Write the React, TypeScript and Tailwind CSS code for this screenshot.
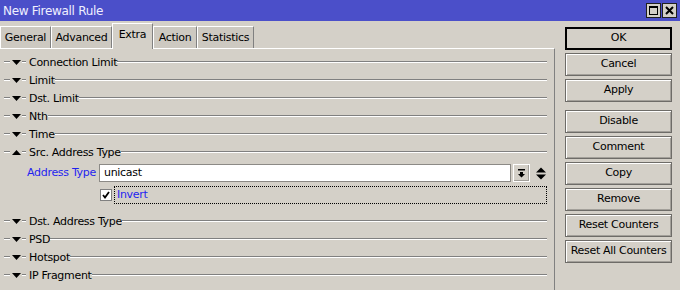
import React from 'react';

const SECTIONS_TOP = ['Connection Limit', 'Limit', 'Dst. Limit', 'Nth', 'Time'];
const SECTIONS_BOTTOM = ['Dst. Address Type', 'PSD', 'Hotspot', 'IP Fragment'];

const TABS: { label: string; w: string }[] = [
  { label: 'General', w: 'w-[51px]' },
  { label: 'Advanced', w: 'w-[61px]' },
  { label: 'Extra', w: 'w-[41px]' },
  { label: 'Action', w: 'w-[44px]' },
  { label: 'Statistics', w: 'w-[57px]' },
];

function Etch({ className = '' }: { className?: string }) {
  return <span className={`block h-[2px] border-t border-[#808080] border-b border-b-white ${className}`} />;
}

function Section({ title, open }: { title: string; open?: boolean }) {
  return (
    <div className="flex h-[18px] items-center">
      <Etch className="ml-[4px] mt-[-2px] w-[6px]" />
      <svg className="ml-[2px] mt-[-2px]" width="9" height="5" viewBox="0 0 9 5">
        {open ? <polygon points="0,5 9,5 4.5,0" fill="#000" /> : <polygon points="0,0 9,0 4.5,5" fill="#000" />}
      </svg>
      <Etch className="ml-[1px] mt-[-2px] w-[4px]" />
      <span className="ml-[3px] text-black">{title}</span>
      <Etch className="mr-[7px] mt-[-2px] flex-1" />
    </div>
  );
}

function Button({ label, primary }: { label: string; primary?: boolean }) {
  return (
    <div
      className={`flex h-[23px] w-[107px] items-center justify-center bg-[#d4d0c8] text-black ${
        primary
          ? 'border-2 border-black'
          : 'border border-[#6e6c68] shadow-[inset_1px_1px_0_#ffffff,inset_-1px_-1px_0_#a3a09a]'
      }`}
    >
      {label}
    </div>
  );
}

export default function App() {
  return (
    <div
      className="flex h-[290px] w-[680px] flex-col overflow-hidden bg-[#d4d0c8] text-[11px] tracking-[-0.3px]"
      style={{ fontFamily: '"DejaVu Sans", sans-serif' }}
    >
      {/* title bar */}
      <div className="flex h-[21px] items-center justify-between bg-[#4b4fc9] pl-[3px] pr-[3px]">
        <span className="text-[12px] text-[#f0f0ff]">New Firewall Rule</span>
        <div className="flex gap-[1px]">
          <div className="flex h-[15px] w-[15px] items-center justify-center border border-[#202020] bg-[#d4d0c8]">
            <span className="block h-[9px] w-[9px] border border-t-2 border-black" />
          </div>
          <div className="flex h-[15px] w-[15px] items-center justify-center border border-[#202020] bg-[#d4d0c8]">
            <svg width="9" height="9" viewBox="0 0 9 9">
              <path d="M1 1 L8 8 M8 1 L1 8" stroke="#000" strokeWidth="2" />
            </svg>
          </div>
        </div>
      </div>

      <div className="flex flex-1">
        {/* left panel */}
        <div className="flex w-[555px] shrink-0 flex-col">
          <div className="flex h-[27px] items-end">
            {TABS.map((t) => {
              const active = t.label === 'Extra';
              return (
                <div
                  key={t.label}
                  className={`relative flex shrink-0 items-center justify-center border-l border-t border-l-white border-t-white border-r border-r-[#808080] ${t.w} ${
                    active ? 'z-10 -mb-px h-[26px] bg-[#d4d0c8] pb-[3px]' : 'h-[22px] bg-[#cdc9c1] pt-[1px]'
                  }`}
                >
                  {t.label}
                </div>
              );
            })}
          </div>
          <div className="flex flex-1 flex-col border-t border-r border-t-white border-r-[#808080] pt-[5px]">
            {SECTIONS_TOP.map((s) => (
              <Section key={s} title={s} />
            ))}
            <Section title="Src. Address Type" open />
            <div className="mt-[1px] flex h-[20px] items-center">
              <div className="w-[99px] shrink-0 whitespace-nowrap pl-[27px] text-[#1f1ff0]">Address Type</div>
              <div className="flex h-[18px] w-[412px] shrink-0 items-center border border-[#8c8a86] bg-white pl-[4px] text-black">
                unicast
              </div>
              <div className="ml-[2px] flex h-[18px] w-[17px] shrink-0 items-center justify-center border border-white shadow-[inset_-1px_-1px_0_#a3a09a]">
                <svg width="9" height="10" viewBox="0 0 9 10">
                  <rect x="1" y="1" width="7" height="1.5" fill="#000" />
                  <polygon points="3,4 6,4 6,6 8,6 4.5,9.5 1,6 3,6" fill="#000" />
                </svg>
              </div>
              <svg className="ml-[6px] shrink-0" width="10" height="13" viewBox="0 0 10 13">
                <polygon points="0,5.5 10,5.5 5,0.5" fill="#000" />
                <polygon points="0,7.5 10,7.5 5,12.5" fill="#000" />
              </svg>
            </div>
            <div className="mt-[3px] flex h-[18px] items-center">
              <div className="ml-[100px] flex h-[12px] w-[12px] shrink-0 items-center justify-center border border-[#808080] bg-white">
                <svg width="8" height="8" viewBox="0 0 8 8">
                  <path d="M1 4 L3 6.5 L7 1" stroke="#000" strokeWidth="1.8" fill="none" />
                </svg>
              </div>
              <div className="ml-[2px] mr-[7px] flex h-[18px] flex-1 items-center border border-dotted border-black pl-[2px] text-[#1f1ff0]">
                Invert
              </div>
            </div>
            <div className="mt-[9px] flex flex-col">
              {SECTIONS_BOTTOM.map((s) => (
                <Section key={s} title={s} />
              ))}
            </div>
          </div>
        </div>

        {/* right buttons */}
        <div className="flex flex-col pl-[10px] pt-[6px]">
          <div className="flex flex-col gap-[3px]">
            <Button label="OK" primary />
            <Button label="Cancel" />
            <Button label="Apply" />
          </div>
          <div className="mt-[8px] flex flex-col gap-[3px]">
            <Button label="Disable" />
            <Button label="Comment" />
            <Button label="Copy" />
            <Button label="Remove" />
            <Button label="Reset Counters" />
            <Button label="Reset All Counters" />
          </div>
        </div>
      </div>
    </div>
  );
}
